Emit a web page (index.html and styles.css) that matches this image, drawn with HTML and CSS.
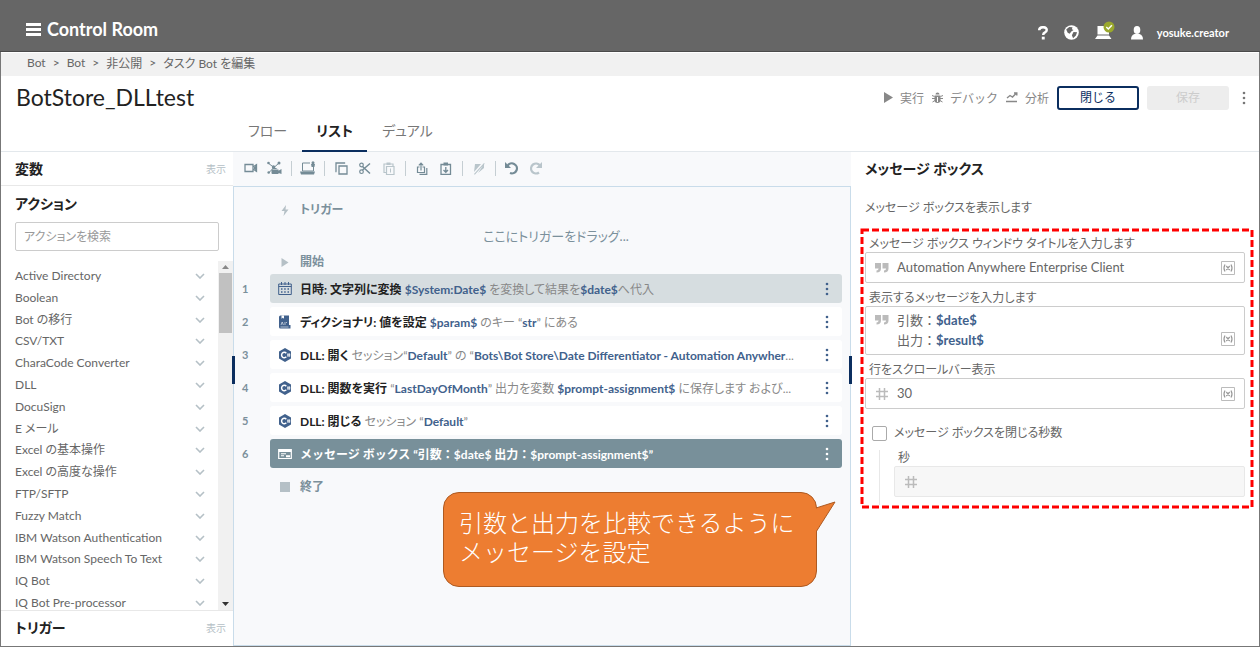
FILE: index.html
```html
<!DOCTYPE html>
<html lang="ja">
<head>
    <meta charset="UTF-8">
    <meta name="viewport" content="width=device-width, initial-scale=1.0">
    <title>タスク Bot を編集 - Control Room</title>
    <link rel="stylesheet" href="styles.css">
</head>
<body>
    <svg class="sprite" width="0" height="0" aria-hidden="true">
        <symbol id="i-chevron" viewBox="0 0 10 6"><path d="M1 1l4 4 4-4" fill="none" stroke="currentColor" stroke-width="1.6"/></symbol>
        <symbol id="i-dots" viewBox="0 0 4 14"><circle cx="2" cy="2" r="1.300"/><circle cx="2" cy="7" r="1.300"/><circle cx="2" cy="12" r="1.300"/></symbol>
        <symbol id="i-play" viewBox="0 0 9 11"><path d="M0 0l9 5.500L0 11z"/></symbol>
        <symbol id="i-csharp" viewBox="0 0 14 14"><path d="M7 0l6 3.400v7.200L7 14l-6-3.400V3.400z"/><path d="M8.300 5.200A2.700 2.700 0 1 0 8.300 8.800" fill="none" stroke="#fff" stroke-width="1.500"/><path d="M9 6.300h3.400M9 7.800h3.400M10 5.300v3.500M11.400 5.300v3.500" stroke="#fff" stroke-width=".7"/></symbol>
        <symbol id="i-quote" viewBox="0 0 14 10"><path d="M0 0h6v5.500Q6 9.500 1.500 9.500V7.500Q3.500 7.300 3.600 5.500H0zM7.500 0h6v5.500q0 4-4.500 4V7.500q2-.2 2.100-2H7.500z"/></symbol>
        <symbol id="i-hash" viewBox="0 0 14 14"><path d="M4.500 1v12M9.500 1v12M1 4.500h12M1 9.500h12" fill="none" stroke="currentColor" stroke-width="1.500"/></symbol>
        <symbol id="i-var" viewBox="0 0 14 14"><path d="M.5.5h13v13H.5z" fill="none" stroke="currentColor"/><path d="M4 3.500q-2 3.500 0 7M10 3.500q2 3.500 0 7M5.300 5l3.400 4M8.700 5L5.300 9" fill="none" stroke="#999" stroke-width="1.200"/></symbol>
    </svg>

    <header class="topbar">
        <button class="brand">
            <svg width="15" height="13" viewBox="0 0 15 13"><path d="M0 0h15v3H0zM0 5h15v3H0zM0 10h15v3H0z"/></svg>
            Control Room
        </button>
        <nav class="topnav">
            <button aria-label="ヘルプ"><svg width="10" height="14" viewBox="0 0 10 14"><path d="M1.200 4.300Q1.200 1.200 5 1.200T8.700 4q0 1.600-1.800 2.500Q5.200 7.300 5.200 9" fill="none" stroke="currentColor" stroke-width="2.500"/><path d="M3.800 10.700h2.900v2.800H3.800z"/></svg></button>
            <button aria-label="言語"><svg width="15" height="15" viewBox="0 0 15 15"><circle cx="7.500" cy="7.500" r="7.300"/><path d="M2.200 4.500l3-2.500 3.300.3-.6 2 1.600.7-2.200 1.500-1.600 2.200-2-1zM9.500 7l3.600.3-1.200 3.200-2.800 2.700-1.200-3z" fill="#666"/></svg></button>
            <button aria-label="デバイス"><svg class="device" width="20" height="20" viewBox="0 0 20 20"><path d="M2.500 5H14v8.500H2.500zM0 18l2.500-3.500h11.500l2.500 3.500z"/><circle cx="14" cy="6" r="5.500" fill="#9aa82c"/><path d="M11.300 6l2 2 3.600-3.800" fill="none" stroke="#fff" stroke-width="1.500"/></svg></button>
            <button class="user"><svg width="12" height="14" viewBox="0 0 12 14"><ellipse cx="6" cy="4" rx="3.300" ry="4"/><path d="M0 13.500Q0 9 3.500 8h5Q12 9 12 13.500z"/></svg>yosuke.creator</button>
        </nav>
    </header>

    <div class="frame">
        <nav class="breadcrumb">
            <a href="#">Bot</a><span>&gt;</span><a href="#">Bot</a><span>&gt;</span><a href="#">非公開</a><span>&gt;</span><a href="#">タスク Bot を編集</a>
        </nav>

        <section class="titlebar">
            <h1>BotStore_DLLtest</h1>
            <div class="commands">
                <button class="cmd"><svg width="9" height="11"><use href="#i-play"/></svg>実行</button>
                <button class="cmd"><svg width="11" height="11" viewBox="0 0 11 11"><path d="M3.500 2.500a2 2 0 0 1 4 0zM2.500 3.500h6V8a3 3 0 0 1-6 0z"/><path d="M0 3.500l2.500 1M11 3.500l-2.500 1M0 6.500h11M.5 10l2.500-1.500M10.500 10L8 8.500" fill="none" stroke="currentColor"/><path d="M5.500 5v5" stroke="#fff"/></svg>デバック</button>
                <button class="cmd"><svg width="12" height="11" viewBox="0 0 12 11"><path d="M1 6l3-2.500L6.500 5l4-4M8 1h2.800v2.500M0 9.500h11" fill="none" stroke="currentColor" stroke-width="1.400"/></svg>分析</button>
                <button class="btn btn-outline">閉じる</button>
                <button class="btn" disabled>保存</button>
                <button class="more" aria-label="その他"><svg width="4" height="14"><use href="#i-dots"/></svg></button>
            </div>
        </section>

        <nav class="tabs">
            <button>フロー</button>
            <button class="active">リスト</button>
            <button>デュアル</button>
        </nav>

        <main class="workspace">
            <aside class="palette">
                <div class="palette-head"><h2>変数</h2><a href="#">表示</a></div>
                <div class="search">
                    <h2><label for="search">アクション</label></h2>
                    <input id="search" type="text" placeholder="アクションを検索">
                </div>
                <div class="actions">
                    <ul id="action-list"></ul>
                    <div class="scrollbar">
                        <svg width="7" height="4" viewBox="0 0 7 4"><path d="M0 4l3.500-4L7 4z" fill="#888"/></svg>
                        <div class="thumb"></div>
                        <svg width="7" height="4" viewBox="0 0 7 4"><path d="M0 0h7L3.500 4z" fill="#333"/></svg>
                    </div>
                </div>
                <div class="palette-foot"><h2>トリガー</h2><a href="#">表示</a></div>
            </aside>

            <section class="editor">
                <div class="toolbar">
                    <button aria-label="記録"><svg width="14" height="10" viewBox="0 0 14 10"><path d="M1 1.500h8v7H1zM9 4l3.500-2.300v6.600L9 6z" fill="none" stroke="currentColor" stroke-width="1.300"/><path d="M10 4l3-2v6l-3-2z"/></svg></button>
                    <button aria-label="スマート記録"><svg width="16" height="14" viewBox="0 0 16 14"><path d="M1 2l6 4.500L12 2M1.500 12L7 6.500" fill="none" stroke="currentColor"/><circle cx="1.500" cy="2" r="1.300"/><circle cx="12" cy="2" r="1.500"/><circle cx="1.700" cy="11.500" r="1.300"/><circle cx="6.500" cy="6" r="1.700"/><path d="M4.500 8.500h7v1.200l3-1.700v5l-3-1v1h-6q-1 0-1-1zM5.500 7q2.500-1.500 5 1h-5z"/></svg></button>
                    <i></i>
                    <button aria-label="デバイス"><svg width="16" height="14" viewBox="0 0 16 14"><path d="M10 2H2.500v8h11V6" fill="none" stroke="currentColor"/><path d="M0 10.500h15l-1 3H1zM11 3h4l-.6 3h-2.800z"/><circle cx="13" cy="1.700" r="1.500"/></svg></button>
                    <i></i>
                    <button aria-label="コピー"><svg width="13" height="13" viewBox="0 0 13 13"><path d="M4 4h8v8H4zM1.500 9.500H1V1h8.500v.8" fill="none" stroke="currentColor" stroke-width="1.300"/></svg></button>
                    <button aria-label="切り取り"><svg width="12" height="13" viewBox="0 0 12 13"><path d="M3.500 4.500L11 11.500M3.500 8L11 1.500" fill="none" stroke="currentColor" stroke-width="1.500"/><circle cx="2.500" cy="3" r="1.800" fill="none" stroke="currentColor" stroke-width="1.200"/><circle cx="2.500" cy="9.700" r="1.800" fill="none" stroke="currentColor" stroke-width="1.200"/></svg></button>
                    <button aria-label="貼り付け" disabled><svg width="12" height="13" viewBox="0 0 12 13"><path d="M3 10.500H1V2h9v2M3.500 4.500H11v8H3.500z" fill="none" stroke="currentColor" stroke-width="1.200"/><path d="M3.500.5h4V3h-4zM7 6.500h1v4H7z"/></svg></button>
                    <i></i>
                    <button aria-label="共有クリップボードにコピー"><svg width="12" height="13" viewBox="0 0 12 13"><path d="M3.500 5h-2v5.500h7V5h-2M5 8.500V1M2.800 3.300L5 1l2.200 2.300M10.800 6v6.400H3.500" fill="none" stroke="currentColor" stroke-width="1.200"/></svg></button>
                    <button aria-label="共有クリップボードから貼り付け"><svg width="12" height="13" viewBox="0 0 12 13"><path d="M1 2.500h9.500v10H1zM5.800 5v5M3.500 8l2.300 2.300L8 8" fill="none" stroke="currentColor" stroke-width="1.300"/><path d="M3.500.5H8v3H3.500z"/></svg></button>
                    <i></i>
                    <button aria-label="無効化" disabled><svg width="12" height="13" viewBox="0 0 12 13"><path d="M2 2h6L1 10zM5 11l6-9v4zM1 12L11 1l.7.7L1.800 12.700z"/></svg></button>
                    <i></i>
                    <button aria-label="元に戻す"><svg width="14" height="14" viewBox="0 0 14 14"><path d="M2.500 5A5 5 0 1 1 5 12" fill="none" stroke="currentColor" stroke-width="2.200"/><path d="M0 1v6h6z"/></svg></button>
                    <button aria-label="やり直し" disabled><svg width="14" height="14" viewBox="0 0 14 14"><path d="M11 4.500A5 5 0 1 0 10 11.500" fill="none" stroke="currentColor" stroke-width="2.200"/><path d="M13 1v6H7z"/></svg></button>
                </div>

                <div class="canvas">
                    <div class="marker"><svg width="7" height="11" viewBox="0 0 7 11"><path d="M4.500 0L0 6h3L2 11l5-6.500H4z"/></svg>トリガー</div>
                    <p class="drop">ここにトリガーをドラッグ...</p>
                    <div class="marker"><svg width="7" height="9" viewBox="0 0 7 9"><path d="M0 0l7 4.500L0 9z"/></svg>開始</div>

                    <ol class="steps">
                        <li><span class="num">1</span>
                            <div class="step hover"><svg width="14" height="14" viewBox="0 0 14 14"><path d="M.7 2h12.600v10.500H.7zM.7 4.500h12.600M3.500 0v3M7 0v3M10.500 0v3" fill="none" stroke="currentColor"/><path d="M3 6.200h1.500v1.500H3zM6.200 6.200h1.500v1.500H6.200zM9.500 6.200H11v1.500H9.500zM3 9.200h1.500v1.500H3zM6.200 9.200h1.500v1.500H6.200zM9.500 9.200H11v1.500H9.500z"/></svg>
                            <p><strong>日時: 文字列に変換</strong> <b>$System:Date$</b> を変換して結果を<b>$date$</b>へ代入</p>
                            <button aria-label="メニュー"><svg width="4" height="14"><use href="#i-dots"/></svg></button></div></li>
                        <li><span class="num">2</span>
                            <div class="step"><svg width="14" height="14" viewBox="0 0 14 14"><path d="M1 2Q1 .5 2.500.5H11V10h1.500v3.500h-10Q1 13.500 1 12z"/><path d="M3.500.5h2.500v3.200l-1.200-.9-1.300.9z" fill="#fff"/><path d="M3 10l1.200-3 1.200 3M7 7v3M9 7.500H8M2.500 12h8" fill="none" stroke="#fff" stroke-width=".6"/></svg>
                            <p><strong>ディクショナリ: 値を設定</strong> <b>$param$</b> のキー “<b>str</b>” にある</p>
                            <button aria-label="メニュー"><svg width="4" height="14"><use href="#i-dots"/></svg></button></div></li>
                        <li><span class="num">3</span>
                            <div class="step"><svg width="14" height="14"><use href="#i-csharp"/></svg>
                            <p><strong>DLL: 開く</strong> セッション“<b>Default</b>” の “<b>Bots\Bot Store\Date Differentiator - Automation Anywher</b>...</p>
                            <button aria-label="メニュー"><svg width="4" height="14"><use href="#i-dots"/></svg></button></div></li>
                        <li><span class="num">4</span>
                            <div class="step"><svg width="14" height="14"><use href="#i-csharp"/></svg>
                            <p><strong>DLL: 関数を実行</strong> “<b>LastDayOfMonth</b>” 出力を変数 <b>$prompt-assignment$</b> に保存します および...</p>
                            <button aria-label="メニュー"><svg width="4" height="14"><use href="#i-dots"/></svg></button></div></li>
                        <li><span class="num">5</span>
                            <div class="step"><svg width="14" height="14"><use href="#i-csharp"/></svg>
                            <p><strong>DLL: 閉じる</strong> セッション “<b>Default</b>”</p>
                            <button aria-label="メニュー"><svg width="4" height="14"><use href="#i-dots"/></svg></button></div></li>
                        <li><span class="num">6</span>
                            <div class="step selected"><svg width="14" height="14" viewBox="0 0 14 14"><path d="M.7 2.500h12.600v9H.7z" fill="none" stroke="currentColor" stroke-width="1.200"/><path d="M1 2.500h12V5H1zM3 6.300h5v1H3zM3 8.300h3v1H3zM8 8.300h4v2H8z"/></svg>
                            <p><strong>メッセージ ボックス “引数：$date$ 出力：$prompt-assignment$”</strong></p>
                            <button aria-label="メニュー"><svg width="4" height="14"><use href="#i-dots"/></svg></button></div></li>
                    </ol>

                    <div class="marker end"><svg width="10" height="10"><path d="M0 0h10v10H0z"/></svg>終了</div>

                    <div class="callout">
                        引数と出力を比較できるように<br>メッセージを設定
                        <svg width="20" height="40" viewBox="0 0 20 40"><path d="M0 7L19 1 0 31" fill="#ed7d31" stroke="#ae5a21"/></svg>
                    </div>
                </div>
                <span class="handle handle-left"></span>
                <span class="handle handle-right"></span>
            </section>

            <aside class="details">
                <h2>メッセージ ボックス</h2>
                <p>メッセージ ボックスを表示します</p>
                <form class="fields">
                    <svg class="highlight" aria-hidden="true"><rect width="100%" height="100%"/></svg>
                    <div class="field">
                        <label for="window-title">メッセージ ボックス ウィンドウ タイトルを入力します</label>
                        <div class="box">
                            <svg width="14" height="10"><use href="#i-quote"/></svg>
                            <input id="window-title" type="text" value="Automation Anywhere Enterprise Client">
                            <button type="button" aria-label="変数を挿入"><svg width="14" height="14"><use href="#i-var"/></svg></button>
                        </div>
                    </div>
                    <div class="field">
                        <label id="message-label">表示するメッセージを入力します</label>
                        <div class="box multi">
                            <svg width="14" height="10"><use href="#i-quote"/></svg>
                            <div class="rich" contenteditable="true" role="textbox" aria-multiline="true" aria-labelledby="message-label" spellcheck="false">引数：<b>$date$</b><br>出力：<b>$result$</b></div>
                            <button type="button" aria-label="変数を挿入"><svg width="14" height="14"><use href="#i-var"/></svg></button>
                        </div>
                    </div>
                    <div class="field">
                        <label for="lines">行をスクロールバー表示</label>
                        <div class="box">
                            <svg width="14" height="14"><use href="#i-hash"/></svg>
                            <input id="lines" type="text" value="30">
                            <button type="button" aria-label="変数を挿入"><svg width="14" height="14"><use href="#i-var"/></svg></button>
                        </div>
                    </div>
                    <label class="check"><input type="checkbox">メッセージ ボックスを閉じる秒数</label>
                    <div class="nested">
                        <label for="seconds">秒</label>
                        <div class="box disabled">
                            <svg width="14" height="14"><use href="#i-hash"/></svg>
                            <input id="seconds" type="text" disabled>
                        </div>
                    </div>
                </form>
            </aside>
        </main>
    </div>

    <script>
        const actions = [
            "Active Directory", "Boolean", "Bot の移行", "CSV/TXT", "CharaCode Converter", "DLL",
            "DocuSign", "E メール", "Excel の基本操作", "Excel の高度な操作", "FTP/SFTP", "Fuzzy Match",
            "IBM Watson Authentication", "IBM Watson Speech To Text", "IQ Bot", "IQ Bot Pre-processor"
        ];
        document.getElementById("action-list").innerHTML = actions.map(name => `
            <li><a href="#">${name}<svg width="10" height="6"><use href="#i-chevron"/></svg></a></li>
        `).join("");
    </script>
</body>
</html>
```
FILE: styles.css
```css
* {
    box-sizing: border-box;
}
body {
    margin: 0;
    min-height: 100vh;
    display: flex;
    flex-direction: column;
    font-family: Lato, "Noto Sans CJK JP", sans-serif;
    font-size: 12px;
    font-feature-settings: "palt";
    color: #666;
    background: #fff;
}
h1, h2, p, ul, ol {
    margin: 0;
    padding: 0;
}
ul, ol {
    list-style: none;
}
h2 {
    font-size: 14px;
    line-height: 20px;
    color: #222;
}
a {
    color: inherit;
    text-decoration: none;
}
button, input {
    font: inherit;
    font-feature-settings: inherit;
    color: inherit;
}
button {
    display: flex;
    align-items: center;
    border: 0;
    padding: 0;
    background: none;
    cursor: pointer;
}
svg {
    fill: currentColor;
    flex: none;
}
.sprite {
    position: absolute;
}

/* header */
.topbar {
    height: 52px;
    display: flex;
    justify-content: space-between;
    padding: 7px 31px 0 26px;
    background: #666;
    border-bottom: 1px solid #4a4a4a;
    color: #fff;
}
.brand {
    gap: 6px;
    font-size: 18px;
    font-weight: bold;
}
.topnav {
    display: flex;
    align-items: center;
    gap: 16px;
    padding-top: 7px;
}
.device {
    margin-bottom: 4px;
}
.user {
    gap: 14px;
    font-size: 11px;
    font-weight: bold;
}

.frame {
    flex: 1;
    display: flex;
    flex-direction: column;
    border: 1px solid #777;
    border-top: 0;
}
.breadcrumb {
    height: 24px;
    display: flex;
    align-items: center;
    gap: 7px;
    padding: 0 0 4px 26px;
    background: #f1f1f1;
    border-top: 1px solid #fff;
}
.titlebar {
    height: 43px;
    display: flex;
    align-items: center;
    justify-content: space-between;
    padding: 0 13px 0 15px;
}
h1 {
    font-size: 23px;
    font-weight: normal;
    line-height: 28px;
    padding-bottom: 2px;
    color: #222;
}
.commands {
    display: flex;
    align-items: center;
    gap: 8px;
    font-feature-settings: normal;
}
.cmd {
    gap: 7px;
    color: #888;
}
.btn {
    width: 82px;
    height: 24px;
    justify-content: center;
    padding-bottom: 2px;
    border-radius: 3px;
    background: #ededed;
    color: #ccc;
}
.btn-outline {
    border: 2px solid #0b2e5f;
    background: #fff;
    color: #0b2e5f;
}
.more {
    margin-left: 5px;
    color: #777;
}
.tabs {
    height: 33px;
    display: flex;
    padding-left: 232px;
    border-bottom: 1px solid #e3e8ec;
}
.tabs button {
    height: 33px;
    padding: 0 15px 12px;
    font-size: 14px;
    color: #777;
}
.tabs .active {
    padding: 0 14px 10px;
    border-bottom: 2px solid #0b2e5f;
    font-weight: bold;
    color: #222;
}

.workspace {
    flex: 1;
    display: grid;
    grid-template-columns: 232px minmax(0, 1fr) 408px;
}

/* left column */
.palette {
    display: flex;
    flex-direction: column;
}
.palette-head, .palette-foot {
    height: 34px;
    display: flex;
    align-items: center;
    justify-content: space-between;
    padding: 0 7px 0 14px;
    border-bottom: 1px solid #e8e8e8;
}
.palette-foot {
    height: 36px;
    padding-bottom: 2px;
    border-top: 1px solid #e8e8e8;
    border-bottom: 0;
}
.palette-head a, .palette-foot a {
    font-size: 10px;
    color: #b5c0c6;
}
.search {
    padding: 8px 14px 10px;
}
.search input {
    width: 100%;
    height: 29px;
    margin-top: 8px;
    padding: 0 8px;
    border: 1px solid #ccc;
    border-radius: 2px;
}
.search input::placeholder {
    color: #999;
}
.actions {
    flex: 1;
    display: flex;
}
.actions ul {
    flex: 1;
    display: grid;
    grid-auto-rows: 1fr;
    margin-bottom: -4px;
    padding: 4px 13px 0 14px;
}
.actions a {
    height: 100%;
    display: flex;
    align-items: center;
    justify-content: space-between;
    line-height: 20px;
}
.actions a svg {
    color: #b5c0c6;
}
.scrollbar {
    width: 15px;
    display: flex;
    flex-direction: column;
    align-items: center;
    padding: 4px 1px;
    background: #f1f1f1;
}
.scrollbar .thumb {
    width: 13px;
    height: 60px;
    margin: 4px 0 auto;
    background: #c1c1c1;
}

/* step list */
.editor {
    position: relative;
    display: flex;
    flex-direction: column;
    background: #f8f9fb;
}
.toolbar {
    height: 34px;
    display: flex;
    align-items: center;
    gap: 8px;
    padding: 0 0 2px 10px;
    color: #748b96;
}
.toolbar button {
    width: 16px;
    justify-content: center;
}
.toolbar button:disabled {
    color: #b9c5cb;
}
.toolbar i {
    width: 1px;
    height: 15px;
    background: #c5ced3;
}
.canvas {
    flex: 1;
    border: 1px solid #c9dcea;
    padding: 11px 8px 0;
}
.marker {
    display: flex;
    align-items: center;
    gap: 10px;
    padding-left: 38px;
    line-height: 24px;
    font-weight: bold;
    color: #7b909b;
}
.marker svg {
    width: 10px;
    color: #b5c0c6;
}
.drop {
    line-height: 28px;
    padding-left: 28px;
    text-align: center;
    font-size: 13px;
    color: #7b909b;
}
.steps {
    display: grid;
    gap: 4px;
}
.steps li {
    display: flex;
    align-items: center;
}
.num {
    width: 28px;
    font-size: 11px;
    font-weight: bold;
    color: #7b909b;
}
.step {
    flex: 1;
    min-width: 0;
    height: 29px;
    display: flex;
    align-items: center;
    gap: 8px;
    padding: 0 13px 0 8px;
    border-radius: 3px;
    background: #fff;
    color: #41618c;
}
.step p {
    flex: 1;
    overflow: hidden;
    text-overflow: ellipsis;
    white-space: nowrap;
    color: #888;
}
.step p strong {
    color: #222;
}
.step p b {
    color: #41618c;
}
.step.hover {
    background: #d6dde0;
}
.step.selected {
    background: #78909a;
    color: #fff;
}
.step.selected strong {
    color: #fff;
    font-feature-settings: normal;
}
.end {
    padding-top: 7px;
}
.callout {
    position: absolute;
    left: 210px;
    top: 340px;
    width: 374px;
    height: 95px;
    padding: 15px;
    border: 1px solid #ae5a21;
    border-radius: 16px;
    background: #ed7d31;
    color: #fff;
    font-size: 24px;
    font-weight: 300;
    font-feature-settings: normal;
    line-height: 29px;
    white-space: nowrap;
}
.callout svg {
    position: absolute;
    left: 372px;
    top: 8px;
}
.handle {
    position: absolute;
    top: 204px;
    width: 3px;
    height: 28px;
    background: #0b2e5f;
}
.handle-left {
    left: -1px;
}
.handle-right {
    right: -1px;
}

/* right column */
.details {
    padding: 7px 14px;
}
.details > p {
    margin-top: 19px;
    line-height: 20px;
}
.fields {
    position: relative;
    margin-top: 18px;
}
.fields label {
    display: block;
    padding-left: 4px;
    line-height: 16px;
}
.highlight {
    position: absolute;
    left: -3px;
    top: -6px;
    width: calc(100% + 10px);
    height: calc(100% + 8px);
    overflow: visible;
    pointer-events: none;
}
.highlight rect {
    fill: none;
    stroke: #f00;
    stroke-width: 3;
    stroke-dasharray: 7 3;
}
.field {
    margin-bottom: 7px;
}
.box {
    min-height: 31px;
    display: flex;
    align-items: center;
    gap: 8px;
    padding: 0 9px;
    border: 1px solid #ccc;
    border-radius: 2px;
    color: #bbb;
    font-size: 13px;
}
.box input {
    flex: 1;
    min-width: 0;
    border: 0;
    padding: 0 0 2px;
    outline: 0;
    background: none;
    color: #666;
}
.multi {
    align-items: flex-start;
    padding: 3px 9px 4px;
}
.multi > svg {
    margin-top: 5px;
}
.multi button {
    align-self: flex-end;
    margin-bottom: 4px;
}
.rich {
    flex: 1;
    outline: 0;
    font-feature-settings: normal;
    line-height: 20px;
    color: #666;
}
.rich b {
    color: #41618c;
}
.fields .check {
    display: flex;
    align-items: center;
    gap: 7px;
    margin-top: 16px;
    padding-left: 7px;
}
.check input {
    appearance: none;
    width: 15px;
    height: 15px;
    margin: 0;
    border: 1px solid #aaa;
    border-radius: 2px;
    background: #fff;
}
.nested {
    margin: 9px 0 0 14px;
    padding: 0 0 8px 14px;
    border-left: 1px solid #e8e8e8;
}
.box.disabled {
    border-color: #e8e8e8;
    background: #f7f7f7;
}
```
